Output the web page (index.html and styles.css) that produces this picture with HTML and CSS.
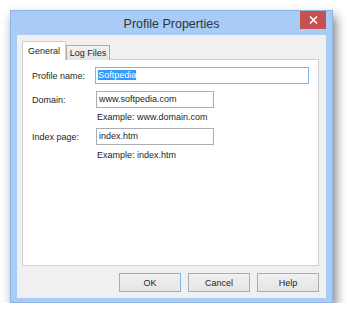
FILE: index.html
```html
<!DOCTYPE html>
<html lang="en">
<head>
    <meta charset="UTF-8">
    <meta name="viewport" content="width=device-width, initial-scale=1.0">
    <title>Profile Properties</title>
    <link rel="stylesheet" href="styles.css">
</head>
<body>
    <div class="window">
        <div class="titlebar">
            <span></span>
            <span class="title">Profile Properties</span>
            <span class="close">
                <svg width="9" height="8" viewBox="0 0 9 8">
                    <path d="M1 0.5 L8 7.5 M8 0.5 L1 7.5" stroke="#fff" stroke-width="1.6"/>
                </svg>
            </span>
        </div>

        <div class="client">
            <!-- Tabs -->
            <div class="tabs">
                <div class="tab active">General</div>
                <div class="tab">Log Files</div>
            </div>

            <div class="panel">
                <div class="row">
                    <span class="label">Profile name:</span>
                    <div class="field wide focused"><span class="selected">Softpedia</span></div>
                </div>
                <div class="row">
                    <span class="label">Domain:</span>
                    <div class="field">www.softpedia.com</div>
                </div>
                <div class="hint">Example: www.domain.com</div>
                <div class="row">
                    <span class="label">Index page:</span>
                    <div class="field">index.htm</div>
                </div>
                <div class="hint">Example: index.htm</div>
            </div>

            <div class="buttons">
                <button class="default">OK</button>
                <button>Cancel</button>
                <button>Help</button>
            </div>
        </div>
    </div>
</body>
</html>
```

FILE: styles.css
```css
body {
    font-family: "Liberation Sans", Arial, sans-serif;
    font-size: 9px;
    color: #1e1e1e;
    margin: 0;
    padding: 0;
    background: #fff;
}

.window {
    margin: 10px 0 0 10px;
    width: 323px;
    height: 293px;
    box-sizing: border-box;
    background: #a8ccf5;
    border: 1px solid #8fb4df;
    padding: 0 6px 4px 6px;
    display: flex;
    flex-direction: column;
    box-shadow: 3px 6px 10px rgba(0, 0, 0, 0.5);
}

/* Title bar */
.titlebar {
    height: 24px;
    display: grid;
    grid-template-columns: 1fr auto 1fr;
}

.title {
    font-size: 12.5px;
    color: #333;
    line-height: 26px;
}

.close {
    justify-self: end;
    width: 26px;
    height: 18px;
    background: #c75050;
    display: flex;
    align-items: center;
    justify-content: center;
}

.client {
    flex: 1;
    background: #f0f0f0;
    padding: 7px 7px 6px 5px;
    display: flex;
    flex-direction: column;
}

/* Tabs */
.tabs {
    display: flex;
    align-items: flex-end;
    height: 18px;
    position: relative;
    z-index: 1;
    margin-bottom: -1px;
}

.tab {
    width: 44px;
    height: 15px;
    line-height: 14px;
    text-align: center;
    box-sizing: border-box;
    border: 1px solid #acacac;
    border-bottom: none;
    background: linear-gradient(#f2f2f2, #e4e4e4);
}

.tab.active {
    height: 19px;
    line-height: 18px;
    background: #fff;
    border-color: #d0d0d0;
}

.panel {
    flex: 1;
    background: #fff;
    border: 1px solid #d0d0d0;
    padding: 7px 9px;
}

.row {
    display: flex;
    align-items: center;
    margin-bottom: 7px;
}

.label {
    width: 64px;
}

.field {
    width: 118px;
    height: 17px;
    box-sizing: border-box;
    border: 1px solid #abadb3;
    padding: 0 2px;
    line-height: 15px;
}

.field.wide {
    width: 216px;
}

.field.focused {
    border-color: #7eb4ea;
}

.selected {
    background: #3399ff;
    color: #fff;
}

.hint {
    margin: -4px 0 5px 65px;
    line-height: 12px;
}

.hint + .row {
    margin-bottom: 8px;
}

/* Buttons */
.buttons {
    display: flex;
    justify-content: flex-end;
    gap: 7px;
    margin-top: 7px;
}

button {
    width: 62px;
    height: 19px;
    font-family: inherit;
    font-size: 9px;
    color: #1e1e1e;
    border: 1px solid #acacac;
    background: linear-gradient(#f0f0f0, #e5e5e5);
    padding: 0;
}

button.default {
    border-color: #7eb4ea;
}
```
